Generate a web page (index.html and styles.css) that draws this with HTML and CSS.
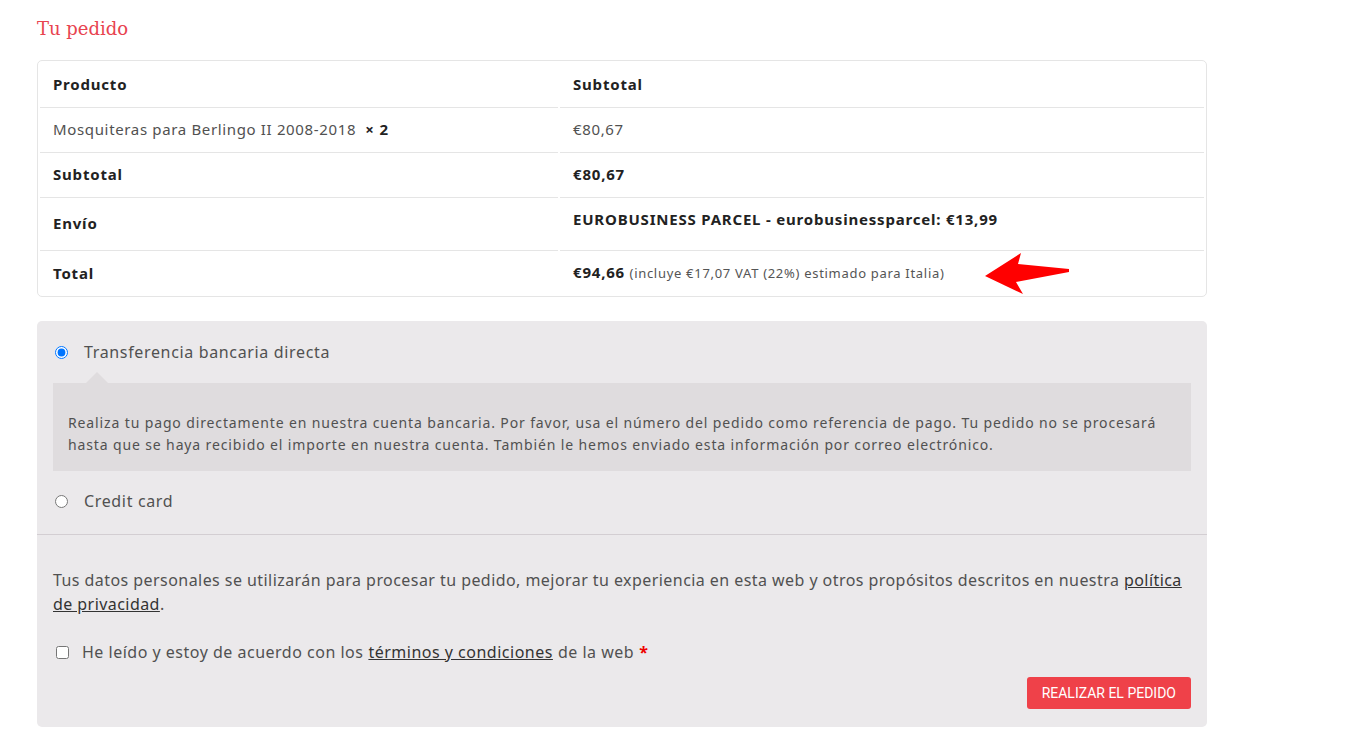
FILE: index.html
```html
<!DOCTYPE html>
<html lang="es">

<head>
  <meta charset="UTF-8">
  <meta name="viewport" content="width=device-width, initial-scale=1.0">
  <title>Tu pedido</title>
  <link rel="stylesheet" href="styles.css">
</head>

<body>
  <div class="checkout">
    <h3 class="order-title">Tu pedido</h3>

    <div class="order-review">
      <table class="shop-table">
        <thead>
          <tr>
            <th class="col-name">Producto</th>
            <th class="col-total">Subtotal</th>
          </tr>
        </thead>
        <tbody>
          <tr>
            <td class="col-name">Mosquiteras para Berlingo II 2008-2018 &nbsp;<strong class="qty">× 2</strong></td>
            <td class="col-total">€80,67</td>
          </tr>
        </tbody>
        <tfoot>
          <tr>
            <th>Subtotal</th>
            <td><strong>€80,67</strong></td>
          </tr>
          <tr class="shipping">
            <th>Envío</th>
            <td>
              <ul class="shipping-methods">
                <li>EUROBUSINESS PARCEL - eurobusinessparcel: €13,99</li>
              </ul>
            </td>
          </tr>
          <tr class="order-total">
            <th>Total</th>
            <td>
              <strong>€94,66</strong> <small class="tax">(incluye €17,07 VAT (22%) estimado para Italia)</small>
              <svg class="arrow" width="90" height="46" viewBox="0 0 90 46">
                <polygon points="2,24 38,1 35,12 86,17 86,20 33,30 40,42" fill="#ff0000" />
              </svg>
            </td>
          </tr>
        </tfoot>
      </table>

      <div class="payment">
        <ul class="payment-methods">
          <li>
            <label class="method"><input type="radio" name="payment_method" checked> Transferencia bancaria directa</label>
            <div class="payment-box">
              <p>Realiza tu pago directamente en nuestra cuenta bancaria. Por favor, usa el número del pedido como referencia de pago. Tu pedido no se procesará hasta que se haya recibido el importe en nuestra cuenta. También le hemos enviado esta información por correo electrónico.</p>
            </div>
          </li>
          <li>
            <label class="method"><input type="radio" name="payment_method"> Credit card</label>
          </li>
        </ul>

        <div class="place-order">
          <p class="privacy">Tus datos personales se utilizarán para procesar tu pedido, mejorar tu experiencia en esta web y otros propósitos descritos en nuestra <a href="#">política de privacidad</a>.</p>
          <p class="terms">
            <label><input type="checkbox"> He leído y estoy de acuerdo con los <a href="#">términos y condiciones</a> de la web <span class="required">*</span></label>
          </p>
          <div class="actions">
            <button type="submit" class="place-btn">Realizar el pedido</button>
          </div>
        </div>
      </div>
    </div>
  </div>
</body>

</html>
```

FILE: styles.css
```css
* {
  box-sizing: border-box;
}

body {
  margin: 0;
  font-family: "Noto Sans", sans-serif;
  font-size: 15px;
  letter-spacing: 0.65px;
  color: #515151;
  background-color: #fff;
}

.checkout {
  width: 1207px;
  padding-left: 37px;
}

.order-title {
  font-family: "DejaVu Serif", serif;
  font-weight: normal;
  font-size: 18px;
  line-height: 24px;
  letter-spacing: 0;
  color: #e8434f;
  margin: 17px 0 19px;
}

/* order table */

.shop-table {
  width: 100%;
  border: 1px solid #e5e5e5;
  border-radius: 5px;
  border-spacing: 2px;
  border-collapse: separate;
  margin-bottom: 24px;
  text-align: left;
}

.shop-table th,
.shop-table td {
  padding: 9px 13px;
  line-height: 24px;
  vertical-align: middle;
}

.shop-table th {
  font-weight: bold;
  color: #222;
  letter-spacing: 0.8px;
}

.shop-table tbody td,
.shop-table tfoot th,
.shop-table tfoot td {
  border-top: 1px solid #e5e5e5;
}

.shop-table .col-name {
  width: 518px;
}

.shop-table strong {
  color: #222;
  letter-spacing: 0.8px;
}

.qty {
  font-weight: bold;
}

.shipping-methods {
  list-style: none;
  margin: 0 0 8px;
  padding: 0;
  font-weight: bold;
  color: #222;
  letter-spacing: 0.8px;
}

.shipping td {
  vertical-align: top;
}

.order-total td {
  position: relative;
}

.tax {
  font-size: 13px;
  color: #555;
  letter-spacing: 0.7px;
}

.arrow {
  position: absolute;
  left: 423px;
  top: 1px;
}

/* payment */

.payment {
  background-color: #ebe9eb;
  border-radius: 5px;
}

.payment-methods {
  list-style: none;
  margin: 0;
  padding: 16px 16px 18px;
  border-bottom: 1px solid #d3ced2;
}

.payment-methods li {
  line-height: 30px;
}

.method {
  font-size: 16px;
  color: #515151;
  display: flex;
  align-items: center;
}

.method input {
  margin: 0 16px 0 2px;
  width: 13px;
  height: 13px;
}

.payment-box {
  position: relative;
  background-color: #dfdcde;
  margin: 16px 0 15px;
  padding: 29px 15px 15px;
  font-size: 14px;
  color: #515151;
  line-height: 22px;
  letter-spacing: 0.87px;
}

.payment-box::before {
  content: "";
  position: absolute;
  top: -11px;
  left: 33px;
  border: 11px solid transparent;
  border-top: none;
  border-bottom-color: #dfdcde;
}

.payment-box p {
  margin: 0;
}

.place-order {
  padding: 33px 16px 18px;
}

.place-order a {
  color: #333;
  text-decoration: underline;
}

.privacy {
  margin: 0 0 24px;
  font-size: 16px;
  line-height: 24px;
  letter-spacing: 0.44px;
}

.terms {
  margin: 0 0 13px;
  font-size: 16px;
  line-height: 24px;
  letter-spacing: 0.5px;
}

.terms label {
  display: flex;
  align-items: center;
}

.terms input {
  margin: 0 13px 0 3px;
  width: 13px;
  height: 13px;
}

.terms a {
  margin: 0 5px;
}

.required {
  color: #e00;
  font-weight: bold;
  margin-left: 5px;
}

.actions {
  display: flex;
  justify-content: flex-end;
}

.place-btn {
  font-family: Roboto, sans-serif;
  font-size: 14px;
  letter-spacing: 0;
  text-transform: uppercase;
  color: #fff;
  background-color: #ef4149;
  border: none;
  border-radius: 3px;
  height: 32px;
  padding: 0 15px;
  cursor: pointer;
}
```
